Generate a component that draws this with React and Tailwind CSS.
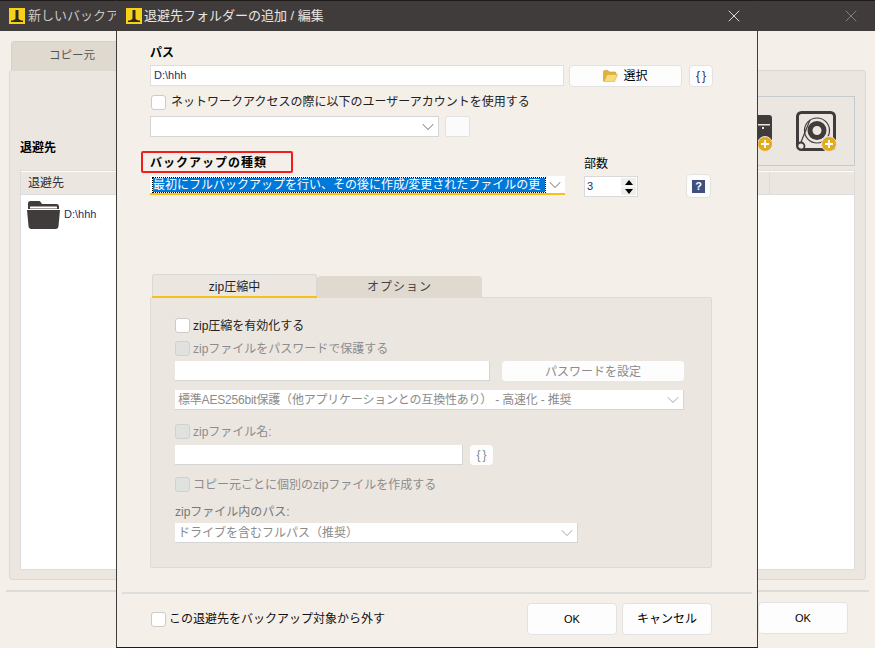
import React from 'react';
import { ChevronDown, X } from 'lucide-react';

const font = { fontFamily: '"Liberation Sans", "Noto Sans CJK JP", sans-serif' };

const AppLogo = () => (
  <svg width="16" height="16" viewBox="0 0 16 16" className="shrink-0">
    <rect width="16" height="16" fill="#f7d117" />
    <path d="M6.500 2h3v8.500h-3z M2 12.500c2.500 0 3.500-.6 4.500-2h3c1 1.400 2 2 4.500 2V14H2z" fill="#2b2a26" />
  </svg>
);

const Check = ({ disabled }) => (
  <span className={`inline-block w-[15px] h-[15px] shrink-0 rounded-[3px] border ${disabled ? 'bg-[#e0e2e0] border-[#cfd2d0]' : 'bg-white border-[#cbcbcb]'}`} />
);

const Chevron = ({ light }) => (
  <ChevronDown size={20} strokeWidth={1.25} className={`shrink-0 ${light ? 'text-[#b9b9b9]' : 'text-[#8a8a8a]'}`} />
);

const Braces = ({ disabled }) => (
  <span className={`text-[12px] tracking-[2px] pl-[2px] ${disabled ? 'text-[#7f8a94]' : 'text-[#1b2f6b]'}`}>{'{}'}</span>
);

const DarkFolder = () => (
  <svg width="33" height="29" viewBox="0 0 33 29">
    <path d="M1 9V3.500C1 2 2 1 3.500 1h8c1 0 1.800.5 2.300 1.300L15 4h14.500C31 4 32 5 32 6.500V9z" fill="#403c3c" />
    <rect x="3" y="6.500" width="27" height="2" fill="#fff" />
    <path d="M0 10h33l-1.500 16c-.1 1.700-1.200 3-3 3h-24c-1.800 0-2.900-1.300-3-3z" fill="#403c3c" />
  </svg>
);

const OpenFolder = () => (
  <svg width="15" height="12" viewBox="0 0 15 12">
    <path d="M.5 11V1.500C.5 1 1 .5 1.500 .5h3.500l1.500 1.500h5.500c.5 0 1 .5 1 1v1.500H4L1.500 11z" fill="#e0b33c" stroke="#c49a2c" strokeWidth=".6" />
    <path d="M1 11.500l3-7h10.500l-3 7z" fill="#f8dc7a" stroke="#d6ab3a" strokeWidth=".6" />
  </svg>
);

const Plus = ({ cx, cy }) => (
  <g>
    <circle cx={cx} cy={cy} r="7.500" fill="#e2aa1d" stroke="#ece6e0" strokeWidth="1" />
    <path d={`M${cx - 4} ${cy}h8M${cx} ${cy - 4}v8`} stroke="#fff" strokeWidth="1.800" />
  </g>
);

const DiskIcon = () => (
  <svg width="41" height="41" viewBox="0 0 41 41">
    <rect x="1.500" y="1.500" width="37" height="37" rx="4" fill="none" stroke="#403c3c" strokeWidth="3" />
    <circle cx="21" cy="19.500" r="12.500" fill="none" stroke="#403c3c" strokeWidth="1.200" />
    <circle cx="21" cy="19.500" r="7" fill="none" stroke="#403c3c" strokeWidth="5" />
    <path d="M14 9L5 31" stroke="#403c3c" strokeWidth="1.200" />
    <circle cx="5" cy="35" r="3.500" fill="#ece6e0" stroke="#403c3c" strokeWidth="1.800" />
    <Plus cx={33} cy={33} />
  </svg>
);

const NasIcon = () => (
  <svg width="40" height="41" viewBox="0 0 40 41">
    <rect x="0" y="4" width="38" height="32" rx="3" fill="#403c3c" />
    <path d="M20 13h16v1.500H20z M28 16h2v2h-2z" fill="#ece6e0" />
    <Plus cx={31} cy={33} />
  </svg>
);

const SmallSelect = ({ className, children, light }) => (
  <div className={`flex items-center justify-between bg-white border-b border-r border-[#d5d5d5] pl-[3px] ${className}`}>
    <span className="whitespace-nowrap">{children}</span>
    <Chevron light={light} />
  </div>
);

const Button = ({ className, children }) => (
  <div className={`flex items-center justify-center bg-[#fdfdfd] border border-[#e2e2e2] rounded-[4px] ${className}`}>
    {children}
  </div>
);

const BackWindow = () => (
  <div className="w-[875px] h-[648px] bg-[#f5efe9] flex flex-col border-t border-[#1f1a1a]">
    <div className="h-[30px] bg-[#403c3c] flex items-center justify-between pl-[9px] pr-[14px] shrink-0">
      <div className="flex items-center gap-[3px] text-[13px] text-[#c9c7c5]">
        <AppLogo />
        <span>新しいバックアップ</span>
      </div>
      <X size={20} strokeWidth={1} className="text-[#8f8c8b]" />
    </div>
    <div className="ml-[11px] mt-[10px] w-[122px] h-[29px] bg-[#e0d9cf] border border-b-0 border-[#d5d0c8] rounded-t-[4px] flex items-center justify-center text-[11.5px] text-[#555]">
      コピー元
    </div>
    <div className="mx-[9px] w-[857px] h-[510px] bg-[#ece6e0] border border-[#dcd8d2] rounded-[3px] px-[10px] pt-[25px]">
      <div className="flex items-end justify-between h-[70px]">
        <span className="font-bold text-[12px] text-black leading-none mb-[12px]">退避先</span>
        <div className="w-[500px] h-[70px] border border-[#c6cbd0] flex items-center justify-end gap-[22px] pr-[17px]">
          <NasIcon />
          <DiskIcon />
        </div>
      </div>
      <div className="mt-[4px] w-[835px] h-[400px] bg-white border border-[#dcdcdc]">
        <div className="h-[24px] bg-[#ece6e0] border-b border-[#dcdcdc] border-t border-t-white flex items-center pl-[7px] text-[12px] text-[#333] relative">
          退避先
          <span className="absolute right-[84px] top-0 bottom-0 w-px bg-[#dcdcdc]" />
        </div>
        <div className="flex items-center gap-[4px] pl-[6px] pt-[5px] text-[11px] text-[#1b2f6b]">
          <DarkFolder />
          <span>D:\hhh</span>
        </div>
      </div>
    </div>
    <div className="mt-[10px] ml-[6px] w-[863px] h-[2px] bg-[#dcdcdc]" />
    <div className="flex justify-end pr-[27px] mt-[10px]">
      <Button className="w-[90px] h-[32px] text-[11px] text-black">OK</Button>
    </div>
  </div>
);

const Dialog = () => (
  <div className="absolute left-[116px] top-0 w-[642px] h-[648px] bg-[#f5efe9] border-x border-b border-t border-x-[#403c3c] border-b-[#1f1a1a] border-t-[#1f1a1a] flex flex-col text-[12px] text-black">
    <div className="h-[30px] bg-[#403c3c] flex items-center justify-between pl-[9px] pr-[13px] shrink-0">
      <div className="flex items-center gap-[2px] text-[13px] text-[#e8e6e4]">
        <AppLogo />
        <span>退避先フォルダーの追加 / 編集</span>
      </div>
      <X size={20} strokeWidth={1} className="text-white" />
    </div>

    <div className="pl-[33px] flex flex-col">
      <div className="mt-[14px] h-[16px] leading-[16px] font-bold">パス</div>

      <div className="mt-[3px] flex items-center h-[23px]">
        <div className="w-[414px] h-[21px] bg-white border border-[#dedede] flex items-center pl-[3px] text-[11px] text-[#1b2f6b]">D:\hhh</div>
        <Button className="ml-[5px] w-[113px] h-[22px] gap-[5px]">
          <OpenFolder />
          <span>選択</span>
        </Button>
        <Button className="ml-[7px] w-[24px] h-[22px]"><Braces /></Button>
      </div>

      <div className="mt-[7px] flex items-center gap-[5px] h-[16px] pl-[1px] text-[#222]">
        <Check />
        <span>ネットワークアクセスの際に以下のユーザーアカウントを使用する</span>
      </div>

      <div className="mt-[6px] flex items-center h-[21px]">
        <SmallSelect className="w-[289px] h-[21px] border-l border-t">{' '}</SmallSelect>
        <div className="ml-[6px] w-[25px] h-[21px] bg-[#fbfbfb] border border-[#e2e2e2] rounded-[2px]" />
      </div>

      <div className="mt-[18px] flex items-start">
        <div className="w-[415px]">
          <div className="relative h-[16px] leading-[16px] font-bold tracking-[1px]">
            バックアップの種類
            <span className="absolute -left-[9px] -top-[4px] w-[152px] h-[22px] border-[2px] border-[#f21c1c] rounded-[2px]" />
          </div>
          <div className="mt-[5px] h-[19px] bg-white border-b-2 border-[#f5c21b] flex items-center justify-between pl-[3px]">
            <span className="bg-[#0078d7] text-white h-[14px] leading-[14px] whitespace-nowrap flex-1 outline-1 outline-dotted outline-black">最初にフルバックアップを行い、その後に作成/変更されたファイルの更</span>
            <Chevron />
          </div>
        </div>
        <div className="ml-[19px] w-[54px]">
          <div className="h-[16px] leading-[16px] pt-[1px]">部数</div>
          <div className="mt-[5px] h-[21px] bg-white border border-[#d9d9d9] flex items-center justify-between pl-[2px] pr-[1px] text-[11px] text-[#1b2f6b]">
            <span>3</span>
            <span className="flex flex-col gap-px">
              <span className="w-[15px] h-[8px] bg-[#eee] flex items-center justify-center"><span className="w-0 h-0 border-x-[4px] border-x-transparent border-b-[5px] border-b-black" /></span>
              <span className="w-[15px] h-[8px] bg-[#eee] flex items-center justify-center"><span className="w-0 h-0 border-x-[4px] border-x-transparent border-t-[5px] border-t-black" /></span>
            </span>
          </div>
        </div>
        <Button className="ml-[48px] mt-[19px] w-[25px] h-[24px]">
          <span className="w-[13px] h-[13px] bg-[#3f4f82] text-white font-bold text-[11px] leading-[13px] text-center">?</span>
        </Button>
      </div>

      <div className="mt-[76px] ml-[2px] flex items-end h-[24px]">
        <div className="w-[165px] h-[24px] bg-[#ece6e0] border border-b-0 border-[#d8d8d6] rounded-t-[3px] relative flex items-center justify-center text-[#222]">
          zip圧縮中
          <span className="absolute -left-px -right-px bottom-0 h-[2px] bg-[#f5c21b]" />
        </div>
        <div className="w-[165px] h-[22px] bg-[#e0d9cf] rounded-t-[4px] flex items-center justify-center text-[#444] tracking-[1px]">オプション</div>
      </div>

      <div className="-mt-px w-[562px] h-[271px] bg-[#ece6e0] border border-[#dedbd7] rounded-[2px] pl-[24px] flex flex-col text-[#8c8c8c]">
        <div className="mt-[20px] flex items-center gap-[3px] h-[15px] text-[#222]">
          <Check />
          <span>zip圧縮を有効化する</span>
        </div>
        <div className="mt-[8px] flex items-center gap-[3px] h-[15px]">
          <Check disabled />
          <span>zipファイルをパスワードで保護する</span>
        </div>
        <div className="mt-[5px] flex h-[20px]">
          <div className="w-[315px] bg-white border-b border-r border-[#d5d5d5]" />
          <Button className="ml-[12px] w-[182px] border-0 rounded-[3px] text-[#8c8c8c] pt-[1px]">パスワードを設定</Button>
        </div>
        <SmallSelect light className="mt-[9px] w-[509px] h-[20px] tracking-[-0.2px]">標準AES256bit保護（他アプリケーションとの互換性あり） - 高速化 - 推奨</SmallSelect>
        <div className="mt-[14px] flex items-center gap-[3px] h-[15px]">
          <Check disabled />
          <span>zipファイル名:</span>
        </div>
        <div className="mt-[6px] flex h-[20px]">
          <div className="w-[288px] bg-white border-b border-r border-[#d5d5d5]" />
          <Button className="ml-[7px] w-[23px] border-0 rounded-[2px]"><Braces disabled /></Button>
        </div>
        <div className="mt-[12px] flex items-center gap-[3px] h-[15px]">
          <Check disabled />
          <span>コピー元ごとに個別のzipファイルを作成する</span>
        </div>
        <div className="mt-[13px] h-[14px] leading-[14px] text-[#777]">zipファイル内のパス:</div>
        <SmallSelect light className="mt-[4px] w-[403px] h-[20px]">ドライブを含むフルパス（推奨）</SmallSelect>
      </div>
    </div>

    <div className="mt-[24px] ml-[5px] w-[630px] h-[2px] bg-[#dedede]" />

    <div className="mt-[9px] flex items-center pl-[34px] pr-[45px]">
      <div className="flex items-center gap-[3px] text-[#111]">
        <Check />
        <span>この退避先をバックアップ対象から外す</span>
      </div>
      <Button className="ml-auto w-[90px] h-[32px] text-[11px]">OK</Button>
      <Button className="ml-[5px] w-[90px] h-[32px]">キャンセル</Button>
    </div>
  </div>
);

export default function App() {
  return (
    <div className="relative w-[875px] h-[648px] overflow-hidden" style={font}>
      <BackWindow />
      <Dialog />
    </div>
  );
}
